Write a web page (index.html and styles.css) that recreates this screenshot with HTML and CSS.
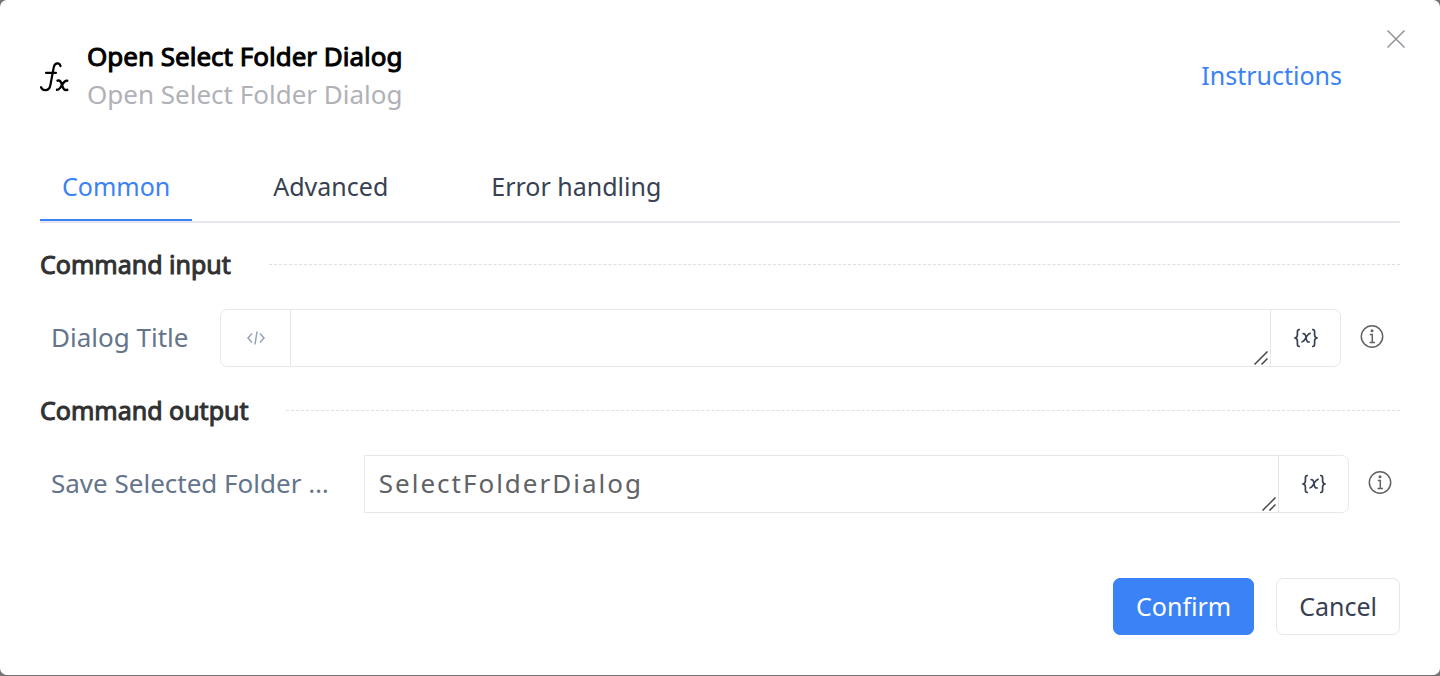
FILE: index.html
```html
<!DOCTYPE html>
<html lang="en">
<head>
<meta charset="utf-8">
<meta name="viewport" content="width=device-width, initial-scale=1">
<title>Open Select Folder Dialog</title>
<link rel="stylesheet" href="styles.css">
</head>
<body>
<svg class="symbols" aria-hidden="true">
  <symbol id="info" viewBox="0 0 24 24" fill="none" stroke="currentColor" stroke-width="1.5">
    <circle cx="12" cy="11.500" r="10.700"/>
    <path d="M9.800 9.500h2.500v8M9.500 17.500h5.500"/>
    <circle cx="12" cy="5.800" r="1.500" fill="currentColor" stroke="none"/>
  </symbol>
  <symbol id="variable" viewBox="0 0 24 20" fill="none" stroke="currentColor" stroke-width="1.7">
    <path d="M6 1.500h-.6c-1.600 0-2 .8-2 2.400v3.200c0 1.600-.6 2.400-2.200 2.900 1.600.5 2.200 1.300 2.200 2.900v3.200c0 1.600.4 2.400 2 2.400H6M18 1.500h.6c1.600 0 2 .8 2 2.400v3.200c0 1.600.6 2.400 2.200 2.900-1.600.5-2.200 1.300-2.200 2.900v3.200c0 1.600-.4 2.400-2 2.400H18"/>
    <path d="M8.500 5.700c2.200-.6 3 .6 3.500 4 .5 3.500 1.400 4.900 3.800 4.100M16.800 5.500c-1.900-.3-3.200 1.200-4.800 4.200s-2.600 4.400-4.600 4.100"/>
  </symbol>
  <symbol id="grip" viewBox="0 0 14 14" fill="none" stroke="currentColor" stroke-width="1.500">
    <path d="M.5 13.500l13-13M7.500 13.500l6-6"/>
  </symbol>
</svg>
<main class="dialog" role="dialog" aria-labelledby="dialog-title">
  <button class="close" type="button" aria-label="Close">
    <svg viewBox="0 0 18 18" width="18" height="18" fill="none" stroke="currentColor" stroke-width="1.500"><path d="M.5.5l17 17M17.500.5l-17 17"/></svg>
  </button>
  <header class="header">
    <svg class="function-icon" viewBox="0 0 28 30" fill="none" stroke="currentColor" stroke-linecap="round">
      <path stroke-width="2.200" d="M20 4.200C19.500.6 14.500-.1 13.300 5L9.800 23.500c-1 5.600-7.400 6-9.300 1.700M5.500 10.800h10"/>
      <path stroke-width="2.400" d="M17 18.700c2.200-.8 3.400.4 4.500 4.300s2.500 5.800 5.300 4.800M26.800 18.700c-2.800-.4-4 1.900-5.300 4.300s-2.600 5-5 4.800"/>
    </svg>
    <div class="titles">
      <h1 class="title" id="dialog-title">Open Select Folder Dialog</h1>
      <p class="subtitle">Open Select Folder Dialog</p>
    </div>
    <a class="instructions" href="#">Instructions</a>
  </header>
  <div class="tabs" role="tablist">
    <button class="tab tab-active" type="button" role="tab" aria-selected="true">Common</button>
    <button class="tab" type="button" role="tab" aria-selected="false">Advanced</button>
    <button class="tab" type="button" role="tab" aria-selected="false">Error handling</button>
  </div>
  <h2 class="section">Command input</h2>
  <div class="field">
    <label class="label" for="dialog-title-input">Dialog Title</label>
    <div class="group">
      <button class="addon addon-code" type="button" aria-label="Code mode">
        <svg viewBox="0 0 18 14" width="18" height="14" fill="none" stroke="currentColor" stroke-width="1.500"><path d="M5 2.500L1 7l4 4.500M13 2.500L17 7l-4 4.500M10 .5l-2 13"/></svg>
      </button>
      <div class="entry">
        <textarea class="input" id="dialog-title-input" rows="1"></textarea>
        <svg class="grip" aria-hidden="true"><use href="#grip"/></svg>
      </div>
      <button class="addon" type="button" aria-label="Insert variable"><svg class="variable-icon"><use href="#variable"/></svg></button>
    </div>
    <button class="info" type="button" aria-label="About Dialog Title"><svg class="info-icon"><use href="#info"/></svg></button>
  </div>
  <h2 class="section">Command output</h2>
  <div class="field field-output">
    <label class="label" for="output-input">Save Selected Folder …</label>
    <div class="group group-square">
      <div class="entry">
        <textarea class="input input-code" id="output-input" rows="1">SelectFolderDialog</textarea>
        <svg class="grip" aria-hidden="true"><use href="#grip"/></svg>
      </div>
      <button class="addon" type="button" aria-label="Insert variable"><svg class="variable-icon"><use href="#variable"/></svg></button>
    </div>
    <button class="info" type="button" aria-label="About Save Selected Folder"><svg class="info-icon"><use href="#info"/></svg></button>
  </div>
  <footer class="footer">
    <button class="button button-primary" type="button">Confirm</button>
    <button class="button" type="button">Cancel</button>
  </footer>
</main>
</body>
</html>
```
FILE: styles.css
```css
* {
  box-sizing: border-box;
}

body {
  margin: 0;
  background: #737373;
  color: #374151;
  font: 26px/38px "Noto Sans", sans-serif;
}

button,
textarea {
  margin: 0;
  padding: 0;
  border: 0;
  background: none;
  color: inherit;
  font: inherit;
}

button {
  cursor: pointer;
}

svg {
  display: block;
}

.symbols {
  position: absolute;
  width: 0;
  height: 0;
}

.dialog {
  position: relative;
  min-height: calc(100vh - 1px);
  margin-bottom: 1px;
  padding: 37px 40px 40px;
  border-radius: 7px;
  background: #fff;
}

.close {
  position: absolute;
  top: 29px;
  right: 34px;
  padding: 1px;
  color: #909399;
}

.header {
  display: flex;
  align-items: center;
  gap: 18px;
  padding-right: 58px;
}

.function-icon {
  width: 29px;
  height: 30px;
  margin-top: 4px;
  color: #000;
  overflow: visible;
}

.titles {
  flex: 1;
}

.title,
.subtitle {
  margin: 0;
  font-size: 26px;
  font-weight: 400;
}

.title {
  color: #000;
  -webkit-text-stroke: 1px;
}

.subtitle {
  color: #b1b1b8;
}

.instructions,
.tab,
.section,
.button {
  font-size: 25px;
}

.instructions {
  color: #3b82f6;
  text-decoration: none;
}

.tabs {
  display: flex;
  gap: 59px;
  margin: 41px 0 22px;
  border-bottom: 2px solid #e4e7ed;
}

.tab {
  padding: 13px 22px 14px;
  border-bottom: 2px solid transparent;
}

.tab-active {
  border-color: #3b82f6;
  color: #3b82f6;
}

.section {
  display: flex;
  align-items: center;
  gap: 38px;
  margin: 0 0 26px;
  color: #303133;
  font-weight: 400;
  -webkit-text-stroke: 1px;
}

.section::after {
  content: "";
  flex: 1;
  border-top: 1px dashed #dcdfe6;
}

.field {
  display: flex;
  align-items: center;
  margin-bottom: 24px;
  padding: 0 16px 0 11px;
}

.field-output {
  margin-bottom: 0;
  padding-right: 8px;
}

.label {
  padding: 0 32px 3px 0;
  color: #64748b;
  white-space: nowrap;
}

.field-output .label {
  padding-right: 35px;
}

.group {
  display: flex;
  flex: 1;
  border: 1px solid #e5e7eb;
  border-radius: 7px;
}

.group-square {
  border-radius: 0 7px 7px 0;
}

.addon {
  display: flex;
  align-items: center;
  justify-content: center;
  width: 70px;
  border-left: 1px solid #e5e7eb;
}

.addon-code {
  border-right: 1px solid #e5e7eb;
  border-left: 0;
  color: #94a3b8;
}

.entry {
  position: relative;
  display: flex;
  flex: 1;
}

.input {
  width: 100%;
  padding: 8px 14px 10px;
  outline: 0;
  overflow: hidden;
  resize: none;
}

.input-code {
  color: #606266;
  letter-spacing: 2px;
}

.grip {
  position: absolute;
  right: 2px;
  bottom: 1px;
  width: 14px;
  height: 14px;
  color: #444;
}

.variable-icon {
  width: 24px;
  height: 20px;
}

.info {
  padding: 0 0 2px 19px;
  color: #606266;
}

.info-icon {
  width: 24px;
  height: 24px;
}

.footer {
  display: flex;
  justify-content: flex-end;
  gap: 22px;
  margin-top: 65px;
}

.button {
  padding: 8px 22px 9px;
  border: 1px solid #e5e7eb;
  border-radius: 7px;
}

.button-primary {
  border-color: #3b82f6;
  background: #3b82f6;
  color: #fff;
}
```
